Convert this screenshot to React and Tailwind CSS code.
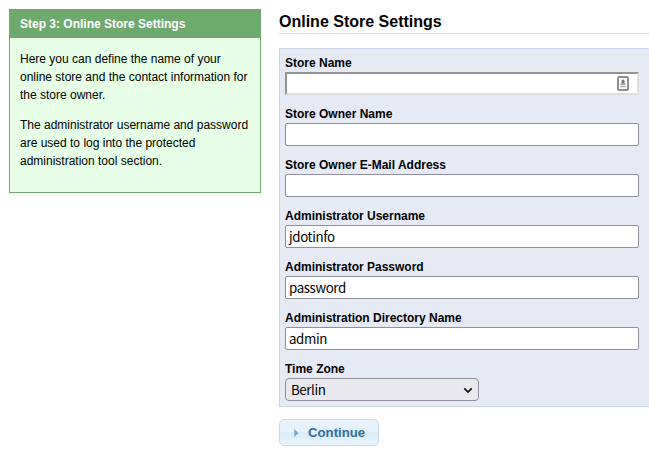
const fields = [
  { label: 'Store Name', value: '', focused: true },
  { label: 'Store Owner Name', value: '' },
  { label: 'Store Owner E-Mail Address', value: '' },
  { label: 'Administrator Username', value: 'jdotinfo' },
  { label: 'Administrator Password', value: 'password' },
  { label: 'Administration Directory Name', value: 'admin' },
];

function ContactIcon() {
  return (
    <svg width="12" height="15" viewBox="0 0 12 15" fill="none">
      <rect x="1" y="1" width="10" height="13" rx="1" stroke="#8c8c8c" strokeWidth="1.9" />
      <path d="M6 3 L7.6 5 L7.3 7.5 H4.7 L4.4 5 Z" fill="#777" />
      <path d="M3.5 7.3 H8.5 V8.7 H3.5 Z" fill="#888" />
      <path d="M3.3 9.6 H8.7 V11.4 H3.3 Z" fill="#b5b5b5" />
    </svg>
  );
}

function ControlText({ children }) {
  return (
    <span className="font-['Noto_Sans_CJK_SC','Noto_Sans',sans-serif] text-[13.333px] leading-[19px] tracking-[-0.4px] text-black">
      {children}
    </span>
  );
}

function Field({ label, value, focused }) {
  return (
    <label className="block h-[51px]">
      <span className="block h-[18px] text-xs leading-[18px] font-bold">{label}</span>
      <span
        className={
          focused
            ? 'flex h-[23px] w-[354px] items-center justify-end border-2 border-t-[#949494] border-r-[#e0e0e0] border-b-[#e0e0e0] border-l-[#949494] bg-white pr-[8px]'
            : 'flex h-[23px] w-[354px] items-center rounded-[2px] border border-[#8f8f9d] bg-white px-[3px]'
        }
      >
        {focused ? <ContactIcon /> : <ControlText>{value}</ControlText>}
      </span>
    </label>
  );
}

export default function App() {
  return (
    <div className="flex h-[454px] w-[649px] items-start overflow-hidden bg-white pl-[9px] font-['Liberation_Sans',Arial,sans-serif] text-xs text-black">
      <aside className="mt-[9px] h-[184px] w-[252px] shrink-0 border border-[#6ea96e] bg-[#e6ffe6]">
        <h3 className="h-[28px] bg-[#6ea96e] pl-[10px] text-xs leading-[28px] font-bold text-white">
          Step 3: Online Store Settings
        </h3>
        <div className="space-y-3 px-[10px] pt-3 leading-[18px]">
          <p>
            Here you can define the name of your
            <br />
            online store and the contact information for
            <br />
            the store owner.
          </p>
          <p>
            The administrator username and password
            <br />
            are used to log into the protected
            <br />
            administration tool section.
          </p>
        </div>
      </aside>

      <main className="ml-[18px] w-[370px] shrink-0">
        <h1 className="mt-[9px] h-[25px] border-b border-[#dddddd] text-base leading-[26px] font-bold">
          Online Store Settings
        </h1>
        <form className="mt-[14px] h-[359px] border border-r-0 border-[#ccd4e8] bg-[#e6eaf5] pt-[5px] pl-[5px]">
          {fields.map((f) => (
            <Field key={f.label} {...f} />
          ))}
          <label className="block">
            <span className="block h-[18px] text-xs leading-[18px] font-bold">Time Zone</span>
            <span className="flex h-[23px] w-[194px] items-center justify-between rounded-[4px] border border-[#8f8f9d] bg-[#e9e9ed] pr-[5px] pl-[5px]">
              <ControlText>Berlin</ControlText>
              <svg className="mt-px" width="10" height="7" viewBox="0 0 10 7" fill="none">
                <path d="M1.3 1.3 L5 5 L8.7 1.3" stroke="#111" strokeWidth="1.7" />
              </svg>
            </span>
          </label>
        </form>
        <button
          type="button"
          className="mt-3 flex h-[27px] w-[100px] items-center rounded-[5px] border border-[#c5dbec] bg-[linear-gradient(#e9f4fd_0%,#e5f1fb_48%,#daecf8_50%,#e9f5fd_100%)] pl-[14px] text-[13.2px] font-bold text-[#2e6e9e]"
        >
          <svg width="5" height="8" viewBox="0 0 5 8">
            <path d="M0.3 0 L4.5 4 L0.3 8 Z" fill="#6da8d5" />
          </svg>
          <span className="ml-[9px]">Continue</span>
        </button>
      </main>
    </div>
  );
}
